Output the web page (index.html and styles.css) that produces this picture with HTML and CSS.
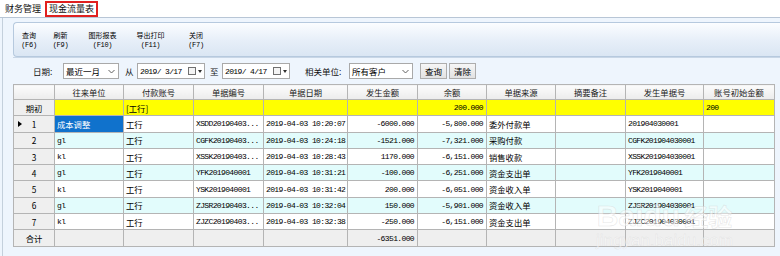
FILE: index.html
```html
<!DOCTYPE html>
<html lang="zh-CN">
<head>
<meta charset="utf-8">
<title>现金流量表</title>
<link rel="stylesheet" href="styles.css">
</head>
<body>
<div class="app">
  <div class="tabs">
    <div class="tab">财务管理</div>
    <div class="tab active">现金流量表</div>
  </div>
  <div class="main">
    <div class="toolbar">
      <div class="tb-btn b1"><span>查询</span><span class="key">(F6)</span></div>
      <div class="tb-btn b2"><span>刷新</span><span class="key">(F9)</span></div>
      <div class="tb-btn b3"><span>图形报表</span><span class="key">(F10)</span></div>
      <div class="tb-btn b4"><span>导出打印</span><span class="key">(F11)</span></div>
      <div class="tb-btn b5"><span>关闭</span><span class="key">(F7)</span></div>
    </div>
    <div class="filters">
      <span class="lbl lbl-date">日期:</span>
      <div class="select sel-range"><span>最近一月</span><svg class="chev" width="7" height="5" viewBox="0 0 7 5"><path d="M0.5 1 L3.5 4 L6.5 1" fill="none" stroke="#606060" stroke-width="1"/></svg></div>
      <span class="lbl lbl-from">从</span>
      <div class="date"><span class="mono">2019/ 3/17</span><svg width="15" height="9" viewBox="0 0 15 9"><rect x="0.5" y="0.5" width="7" height="7" fill="#f4f4f4" stroke="#707070"/><path d="M10 3 L14 3 L12 6 Z" fill="#303030"/></svg></div>
      <span class="lbl lbl-to">至</span>
      <div class="date"><span class="mono">2019/ 4/17</span><svg width="15" height="9" viewBox="0 0 15 9"><rect x="0.5" y="0.5" width="7" height="7" fill="#f4f4f4" stroke="#707070"/><path d="M10 3 L14 3 L12 6 Z" fill="#303030"/></svg></div>
      <span class="lbl lbl-rel">相关单位:</span>
      <div class="select sel-cust"><span>所有客户</span><svg class="chev" width="7" height="5" viewBox="0 0 7 5"><path d="M0.5 1 L3.5 4 L6.5 1" fill="none" stroke="#606060" stroke-width="1"/></svg></div>
      <div class="btn btn-q">查询</div>
      <div class="btn">清除</div>
    </div>
    <table class="grid">
      <colgroup>
        <col style="width:41px"><col style="width:69px"><col style="width:70px"><col style="width:70px"><col style="width:84px"><col style="width:70px"><col style="width:69px"><col style="width:69px"><col style="width:70px"><col style="width:78px"><col style="width:71px">
      </colgroup>
      <thead>
        <tr><th></th><th>往来单位</th><th>付款账号</th><th>单据编号</th><th>单据日期</th><th>发生金额</th><th>余额</th><th>单据来源</th><th>摘要备注</th><th>发生单据号</th><th>账号初始金额</th></tr>
      </thead>
      <tbody>
        <tr class="init"><td class="rh">期初</td><td></td><td>[工行]</td><td></td><td></td><td></td><td class="num">200.000</td><td></td><td></td><td></td><td class="mono">200</td></tr>
        <tr><td class="rh"><div class="rh-in"><span class="mark"></span><span class="no">1</span><span class="sp"></span></div></td><td class="sel">成本调整</td><td>工行</td><td class="mono">XSDD20190403...</td><td class="mono">2019-04-03 10:20:07</td><td class="num">-6000.000</td><td class="num">-5,800.000</td><td>委外付款单</td><td></td><td class="mono">201904030001</td><td></td></tr>
        <tr class="alt"><td class="rh">2</td><td class="mono">gl</td><td>工行</td><td class="mono">CGFK20190403...</td><td class="mono">2019-04-03 10:24:18</td><td class="num">-1521.000</td><td class="num">-7,321.000</td><td>采购付款</td><td></td><td class="mono">CGFK201904030001</td><td></td></tr>
        <tr><td class="rh">3</td><td class="mono">kl</td><td>工行</td><td class="mono">XSSK20190403...</td><td class="mono">2019-04-03 10:28:43</td><td class="num">1170.000</td><td class="num">-6,151.000</td><td>销售收款</td><td></td><td class="mono">XSSK201904030001</td><td></td></tr>
        <tr class="alt"><td class="rh">4</td><td class="mono">gl</td><td>工行</td><td class="mono">YFK2019040001</td><td class="mono">2019-04-03 10:31:21</td><td class="num">-100.000</td><td class="num">-6,251.000</td><td>资金支出单</td><td></td><td class="mono">YFK2019040001</td><td></td></tr>
        <tr><td class="rh">5</td><td class="mono">kl</td><td>工行</td><td class="mono">YSK2019040001</td><td class="mono">2019-04-03 10:31:42</td><td class="num">200.000</td><td class="num">-6,051.000</td><td>资金收入单</td><td></td><td class="mono">YSK2019040001</td><td></td></tr>
        <tr class="alt"><td class="rh">6</td><td class="mono">gl</td><td>工行</td><td class="mono">ZJSR20190403...</td><td class="mono">2019-04-03 10:32:04</td><td class="num">150.000</td><td class="num">-5,901.000</td><td>资金收入单</td><td></td><td class="mono">ZJSR201904030001</td><td></td></tr>
        <tr><td class="rh">7</td><td class="mono">kl</td><td>工行</td><td class="mono">ZJZC20190403...</td><td class="mono">2019-04-03 10:32:38</td><td class="num">-250.000</td><td class="num">-6,151.000</td><td>资金支出单</td><td></td><td class="mono">ZJZC201904030001</td><td></td></tr>
        <tr class="total"><td class="rh">合计</td><td></td><td></td><td></td><td></td><td class="num">-6351.000</td><td></td><td></td><td></td><td></td><td></td></tr>
      </tbody>
    </table>
  </div>
  <div class="watermark"><div class="wm-big">Baidu<span class="wm-cn">经验</span></div><div class="wm-small">jingyan.baidu.com</div></div>
</div>
</body>
</html>
```
FILE: styles.css
```css
* { box-sizing: border-box; }
html, body { margin: 0; padding: 0; }
body {
  width: 780px;
  height: 256px;
  overflow: hidden;
  background: #eef5fd;
  font-family: "Noto Sans CJK SC", "Noto Sans", sans-serif;
  color: #000;
}
.app { position: relative; width: 780px; height: 256px; display: flex; flex-direction: column; }

.tabs {
  height: 18px;
  background: #ffffff;
  border-bottom: 1px solid #b8c6d6;
  display: flex;
  align-items: stretch;
  padding: 1px 0 0 4px;
  gap: 3px;
}
.tab {
  font-size: 9px;
  line-height: 15px;
  padding: 0 1px;
  color: #101010;
}
.tab.active {
  border: 2px solid #e02020;
  padding: 0 2px;
  line-height: 12px;
  height: 16px;
}

.main {
  flex: 1;
  border-left: 1px solid #c4d0dc;
  margin-left: 2px;
  background: #eef5fd;
  padding: 4px 0 0 10px;
  display: flex;
  flex-direction: column;
}

.toolbar {
  height: 35px;
  border: 1px solid #b6c9de;
  border-right: none;
  border-radius: 4px 0 0 4px;
  background: linear-gradient(#fbfdff, #e6eef8 55%, #dae6f3);
  display: flex;
  align-items: center;
  padding-left: 0;
}
.tb-btn {
  width: 30px;
  display: flex;
  flex-direction: column;
  align-items: center;
  font-size: 7px;
  line-height: 10px;
  color: #000;
}
.tb-btn .key { font-family: "Liberation Mono", monospace; font-size: 7px; letter-spacing: -0.3px; }
.b2 { margin-left: 1.5px; }
.b3 { margin-left: 12px; }
.b4 { margin-left: 18px; }
.b5 { margin-left: 15.5px; }

.filters {
  height: 26px;
  display: flex;
  align-items: center;
  padding-top: 1px;
  border-top: 1px solid #c8d6e6;
  font-size: 8.5px;
}
.lbl { color: #101010; white-space: nowrap; }
.lbl-date { margin-left: 20px; width: 30px; }
.lbl-from { margin-left: 6px; width: 7px; }
.lbl-to { margin-left: 5px; width: 7px; }
.lbl-rel { margin-left: 15px; width: 44px; }
.select, .date {
  height: 16px;
  background: #fff;
  border: 1px solid #a9a9a9;
  display: flex;
  align-items: center;
  justify-content: space-between;
  padding: 0 3px 0 2px;
}
.sel-range { width: 56px; }
.sel-cust { width: 64px; }
.date { width: 68px; margin-left: 5px; padding-right: 1px; }
.lbl-to + .date { margin-left: 5px; }
.chev { flex: none; }
.mono {
  font-family: "Liberation Mono", "DejaVu Sans Mono", monospace;
  font-size: 8px;
  letter-spacing: -0.63px;
}
.btn {
  height: 16px;
  border: 1px solid #adadad;
  background: linear-gradient(#f6f6f6, #e2e2e2);
  display: flex;
  align-items: center;
  padding: 0 4px;
  margin-left: 2px;
}
.btn-q { margin-left: 7px; }

.grid {
  border-collapse: collapse;
  table-layout: fixed;
  width: 761px;
  margin-top: 1px;
  background: #fff;
  border: 1px solid #9a9a9a;
  font-size: 8.3px;
}
.grid th, .grid td {
  border: 1px solid #b4b4b4;
  padding: 0 2px;
  height: 16.3px;
  white-space: nowrap;
  overflow: hidden;
  text-overflow: clip;
}
.grid th {
  height: 15px;
  font-weight: normal;
  background: linear-gradient(#fbfbfb, #ececec);
  color: #202020;
  text-align: center;
}
.grid td.rh {
  background: #efefef;
  text-align: center;
  padding: 0;
}
.rh-in { display: flex; align-items: center; }
.mark {
  width: 0; height: 0;
  margin-left: 4px;
  border-top: 3px solid transparent;
  border-bottom: 3px solid transparent;
  border-left: 4px solid #000;
}
.rh-in .no { flex: 1; text-align: center; }
.rh-in .sp { width: 8px; }
.grid td.num {
  text-align: right;
  padding-right: 3px;
  font-family: "Liberation Mono", "DejaVu Sans Mono", monospace;
  font-size: 8px;
  letter-spacing: -0.63px;
}
.grid tr.init td { background: #ffff00; }
.grid tr.init td.rh { background: #efefef; }
.grid tr.alt td { background: #e2fcfc; }
.grid tr.alt td.rh { background: #efefef; }
.grid tr.total td { background: #efefef; }
.grid td.sel { background: #1072cc; color: #fff; }

.watermark {
  position: absolute;
  left: 596px;
  top: 200px;
  color: rgba(255,255,255,0.5);
  text-align: center;
  pointer-events: none;
  font-family: "Liberation Sans", sans-serif;
}
.wm-big { font-size: 30px; line-height: 32px; font-weight: bold; -webkit-text-stroke: 0.6px rgba(200,200,200,0.45); }
.wm-cn { font-family: "Noto Sans CJK SC", sans-serif; font-size: 24px; margin-left: 4px; }
.wm-small { font-size: 17px; line-height: 18px; -webkit-text-stroke: 0.4px rgba(200,200,200,0.45); }
```
